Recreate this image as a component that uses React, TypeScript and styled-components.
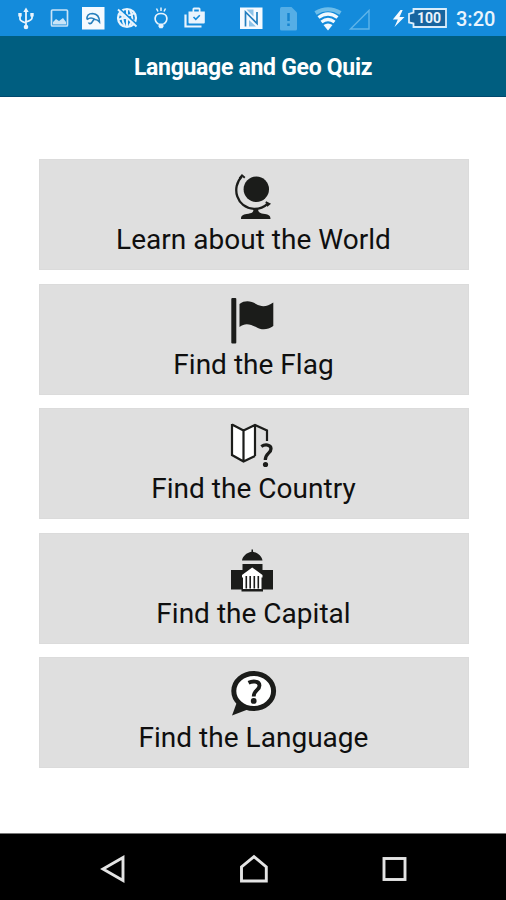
import React from "react";
import styled, { createGlobalStyle } from "styled-components";

const GlobalStyle = createGlobalStyle`
  * { box-sizing: border-box; }
  body { margin: 0; background: #fff; font-family: Roboto, sans-serif; }
`;

const Screen = styled.div`
  width: 506px;
  height: 900px;
  display: flex;
  flex-direction: column;
  background: #fff;
  overflow: hidden;
`;

const StatusBar = styled.div`
  height: 36px;
  flex: none;
  display: flex;
  align-items: center;
  background: #148bdb;
  color: #e9f4fd;
`;

const StatusIcon = styled.svg<{ $gap: number }>`
  display: block;
  flex: none;
  height: 36px;
  margin-left: ${(p) => p.$gap}px;
`;

const Battery = styled.div`
  display: grid;
  align-items: center;
  justify-items: center;
  margin-left: 1px;

  > * { grid-area: 1 / 1; }
`;

const Charge = styled.span`
  font-size: 14px;
  font-weight: 700;
  line-height: 36px;
  padding-left: 3px;
`;

const Clock = styled.span`
  font-size: 20px;
  line-height: 36px;
  font-weight: 500;
  margin: 2px 0 0 8px;
`;

const TitleBar = styled.header`
  height: 61px;
  flex: none;
  display: flex;
  align-items: center;
  justify-content: center;
  padding-top: 4px;
  background: #005e80;
  border-bottom: 1px solid #00496f;
`;

const Title = styled.h1`
  margin: 0;
  color: #fff;
  font-size: 23px;
  line-height: 28px;
  font-weight: 700;
  white-space: nowrap;
  letter-spacing: -0.3px;
`;

const Menu = styled.main`
  flex: 1;
  display: flex;
  flex-direction: column;
  gap: 13.6px;
  padding: 62px 37.5px 0 38.5px;
`;

const MenuButton = styled.button`
  height: 111px;
  display: flex;
  flex-direction: column;
  align-items: center;
  padding: 11px 0 0;
  border: 1px solid #dbdbdb;
  border-radius: 0;
  background: #dfdfdf;
  color: #0f0f0f;
  font-family: inherit;
`;

const Glyph = styled.svg`
  display: block;
  width: 50px;
  height: 50px;
  flex: none;
  margin: 0 2px 2px 0;
`;

const Label = styled.span`
  font-size: 28px;
  line-height: 34px;
  white-space: nowrap;
  letter-spacing: 0.02px;
`;

const NavBar = styled.nav`
  height: 67px;
  flex: none;
  display: flex;
  align-items: center;
  justify-content: space-between;
  padding: 3px 97px 0 98px;
  background: #000;
  border-top: 1px solid #777;
`;

const NavIcon = styled.svg`
  width: 30px;
  height: 30px;
  fill: none;
  stroke: #e4e4e4;
  stroke-width: 2.9;
`;

const ink = "#1b1c1a";

const items = [
  {
    label: "Learn about the World",
    icon: (
      <Glyph viewBox="228 170.500 50 50">
        <circle cx="256.3" cy="188.700" r="12.7" fill={ink} />
        <path d="M241.800 176C231 187 236.500 207.500 254 208.300Q262 208.500 267.500 203.300" fill="none" stroke={ink} strokeWidth="2.300" />
        <path d="M239.500 177.800L242 174.800 244.800 177.200M265.700 201.700L269.300 203.400 266.800 205.500" fill="none" stroke={ink} strokeWidth="1.900" />
        <path d="M253.500 208h4.500c0 4 2 4.800 7 5.500 3.500.5 5.500 1.500 5.500 5h-29.500c0-3.500 2-4.500 5.500-5 6-.8 7-1.500 7-5.500Z" fill={ink} />
      </Glyph>
    ),
  },
  {
    label: "Find the Flag",
    icon: (
      <Glyph viewBox="228 295.500 50 50">
        <rect x="231.300" y="297.500" width="5" height="45.500" rx="1" fill={ink} />
        <path d="M239.500 303.500C245 299.500 251 300.500 256 303.500 262 307 267.500 306 273.300 302V325.500C267 330 261 329.500 256 326.500 250 323.500 245 322 239.500 326.500Z" fill={ink} />
      </Glyph>
    ),
  },
  {
    label: "Find the Country",
    icon: (
      <Glyph viewBox="228 420 50 50">
        <path d="M232 424.500L243.500 430.500 255 425V456L243.500 461.500 232 455Z" fill="#fff" />
        <path d="M243.500 430.500V461M255 425V456M232 424.500L243.500 430.500 255 425 267 430.500V441M255 456L243.500 461.500 232 455V424" fill="none" stroke={ink} strokeWidth="2.200" />
        <path d="M261.300 446.500C265 444 271 444.500 271 448.700C271 453.500 265.300 453 265.300 460" fill="none" stroke={ink} strokeWidth="3.300" />
        <circle cx="265.500" cy="464.500" r="2.600" fill={ink} />
      </Glyph>
    ),
  },
  {
    label: "Find the Capital",
    icon: (
      <Glyph viewBox="228 544.500 50 50">
        <path d="M251.500 549h1.500v2.200c5 1 9 4.500 9.500 8.800h-20.500c.5-4.300 4.500-7.800 9.500-8.800Z" fill={ink} />
        <path d="M242.500 563.500H262.500V569.500H273V589H263V591H241.500V589H231V569.500H242.500Z" fill={ink} />
        <path d="M252.200 567L262.500 574.500V577H261.500V588.500H243V577H242V574.500Z" fill="#fff" />
        <path d="M246.300 575.500V588M250.200 575.500V588M254.300 575.500V588M258.300 575.500V588" stroke={ink} strokeWidth="1.600" />
      </Glyph>
    ),
  },
  {
    label: "Find the Language",
    icon: (
      <Glyph viewBox="228 669 50 50">
        <path d="M237 702L232 715.500 249 709Z" fill={ink} />
        <ellipse cx="253.700" cy="691" rx="19.900" ry="17.500" fill="#fff" stroke={ink} strokeWidth="5" />
        <path d="M248.500 682.800C252 681 259.500 680.500 259.500 685.500C259.500 690.500 253.700 690 253.700 696.500" fill="none" stroke={ink} strokeWidth="3.800" />
        <circle cx="253.700" cy="700.900" r="2.900" fill={ink} />
      </Glyph>
    ),
  },
];

export default function App() {
  return (
    <Screen>
      <GlobalStyle />
      <StatusBar>
        <StatusIcon $gap={17} width="18" viewBox="17 0 18 36" fill="none" stroke="currentColor" strokeWidth="1.800">
          <path d="M26 12V27M20 15v4q0 2 6 4M32 15v3q0 2-6 4" />
          <path d="M26 7.500L28.700 12H23.300ZM18.300 13h3.400v3.400h-3.400ZM30.300 13h3.400v3.400h-3.400Z" fill="currentColor" stroke="none" />
          <circle cx="26" cy="27" r="2.300" fill="currentColor" stroke="none" />
        </StatusIcon>
        <StatusIcon $gap={15} width="20" viewBox="50 0 20 36" opacity=".85">
          <rect x="51.500" y="10" width="16" height="16" rx="1" fill="none" stroke="currentColor" strokeWidth="1.700" />
          <path d="M53 24.500V22l3-3 3 2 4-3 3 4v2.500Z" fill="currentColor" />
        </StatusIcon>
        <StatusIcon $gap={12} width="23" viewBox="82 0 23 36">
          <path d="M82 7h22.500v22.500H82Z" fill="#f4faff" />
          <path d="M87 19.500Q86.500 13.500 92.500 13.500 99.500 14 99.500 22Q97.500 19.500 95 19.500 91 16.500 87 19.500M94.500 18.500L91.500 23q-2 1.500-3-.5" fill="none" stroke="#277fbd" strokeWidth="1.600" />
        </StatusIcon>
        <StatusIcon $gap={11} width="23" viewBox="116 0 23 36" fill="none" stroke="currentColor">
          <circle cx="127" cy="18" r="9" strokeWidth="2.200" />
          <path d="M119 14Q127 18 135 13M118 20Q126 15 135 22M123 10Q121 20 125 26M130 10Q135 19 129 26M127 9V27" strokeWidth="2" />
          <path d="M119.500 9L138 25.500" stroke="#148bdb" strokeWidth="2" />
          <path d="M118 9.500L136.500 26.500" strokeWidth="1.900" />
        </StatusIcon>
        <StatusIcon $gap={14} width="16" viewBox="153 0 16 36" fill="none" stroke="currentColor" strokeWidth="1.700">
          <path d="M158.500 24C153 20.500 154.500 13.500 161 13.500S169 20.500 163.500 24" />
          <path d="M161 7.500v3.500M156.500 8.500l1.500 3M165.500 8.500l-1.500 3" strokeWidth="1.500" />
          <path d="M158.500 23.500h5v3l-1 1.800h-3l-1-1.800Z" fill="currentColor" stroke="none" />
        </StatusIcon>
        <StatusIcon $gap={15} width="22" viewBox="184 0 22 36">
          <path d="M188.500 11.500h4V9q0-1.500 1.500-1.500h5q1.500 0 1.500 1.500v2.500h4.300v11q0 1-1 1h-14.300q-1 0-1-1ZM194.200 11.500h4.600V9.500h-4.600Z" fill="currentColor" fillRule="evenodd" />
          <path d="M185.500 14.500V26.500H201.500" fill="none" stroke="currentColor" strokeWidth="2.200" />
          <path d="M193.500 17l2.300 2.300 4-4" fill="none" stroke="#148bdb" strokeWidth="1.600" />
        </StatusIcon>
        <StatusIcon $gap={34} width="23" viewBox="240 0 23 36">
          <path d="M240 7.500h22.500v21.500H240Z" fill="#f4faff" />
          <path d="M245.500 26.500V12L257 23.500V12" fill="none" stroke="#237fbf" strokeWidth="1.700" />
          <path d="M246.500 9.500L253.500 16.500V9.500M249 20V26.500H256Z" fill="#8dc3e8" />
        </StatusIcon>
        <StatusIcon $gap={17} width="18" viewBox="280 0 18 36">
          <path d="M281.500 7h10l5.500 5.500V29q0 1.500-1.500 1.500h-14q-1.500 0-1.500-1.500V9q0-2 1.500-2Z" fill="#55aee6" />
          <path d="M288.500 13v8M288.500 23.500v2.500" stroke="#1584cf" strokeWidth="2.500" />
        </StatusIcon>
        <StatusIcon $gap={16} width="28" viewBox="314 0 28 36" fill="none">
          <path d="M315.500 13Q328 5.500 340.500 13" stroke="#6dbdea" strokeWidth="4" />
          <path d="M318.500 17.500Q328 10.500 337.500 17.500M321.500 22Q328 17 334.500 22" stroke="#f2f9fe" strokeWidth="3.300" />
          <path d="M323.500 25Q328 22 332.500 25L328 30.500Z" fill="#f2f9fe" />
        </StatusIcon>
        <StatusIcon $gap={7} width="21" viewBox="349 0 21 36" fill="none">
          <path d="M350.500 29H369V10.500Z" stroke="#5eb4e9" strokeWidth="1.400" />
        </StatusIcon>
        <StatusIcon $gap={22} width="14" viewBox="392 0 14 36">
          <path d="M400.500 10L392.800 19.500h5L394.500 27 404.500 17h-5l3.200-7Z" fill="#f4faff" />
        </StatusIcon>
        <Battery>
          <StatusIcon $gap={0} width="41" viewBox="407 0 41 36">
            <path d="M413.500 9H446V27H413.500V23.500L409 22.500V14L413.500 12.500Z" fill="#17659f" stroke="#d9edfb" strokeWidth="1.800" />
          </StatusIcon>
          <Charge>100</Charge>
        </Battery>
        <Clock>3:20</Clock>
      </StatusBar>
      <TitleBar>
        <Title>Language and Geo Quiz</Title>
      </TitleBar>
      <Menu>
        {items.map((item) => (
          <MenuButton key={item.label}>
            {item.icon}
            <Label>{item.label}</Label>
          </MenuButton>
        ))}
      </Menu>
      <NavBar>
        <NavIcon viewBox="98 854 30 30"><path d="M103 869L123 857.500V880.500Z" /></NavIcon>
        <NavIcon viewBox="239 854 30 30"><path d="M241.500 881V867L254 856.700 266.300 867V881Z" /></NavIcon>
        <NavIcon viewBox="379 854 30 30"><rect x="384" y="858.500" width="21" height="21" /></NavIcon>
      </NavBar>
    </Screen>
  );
}
